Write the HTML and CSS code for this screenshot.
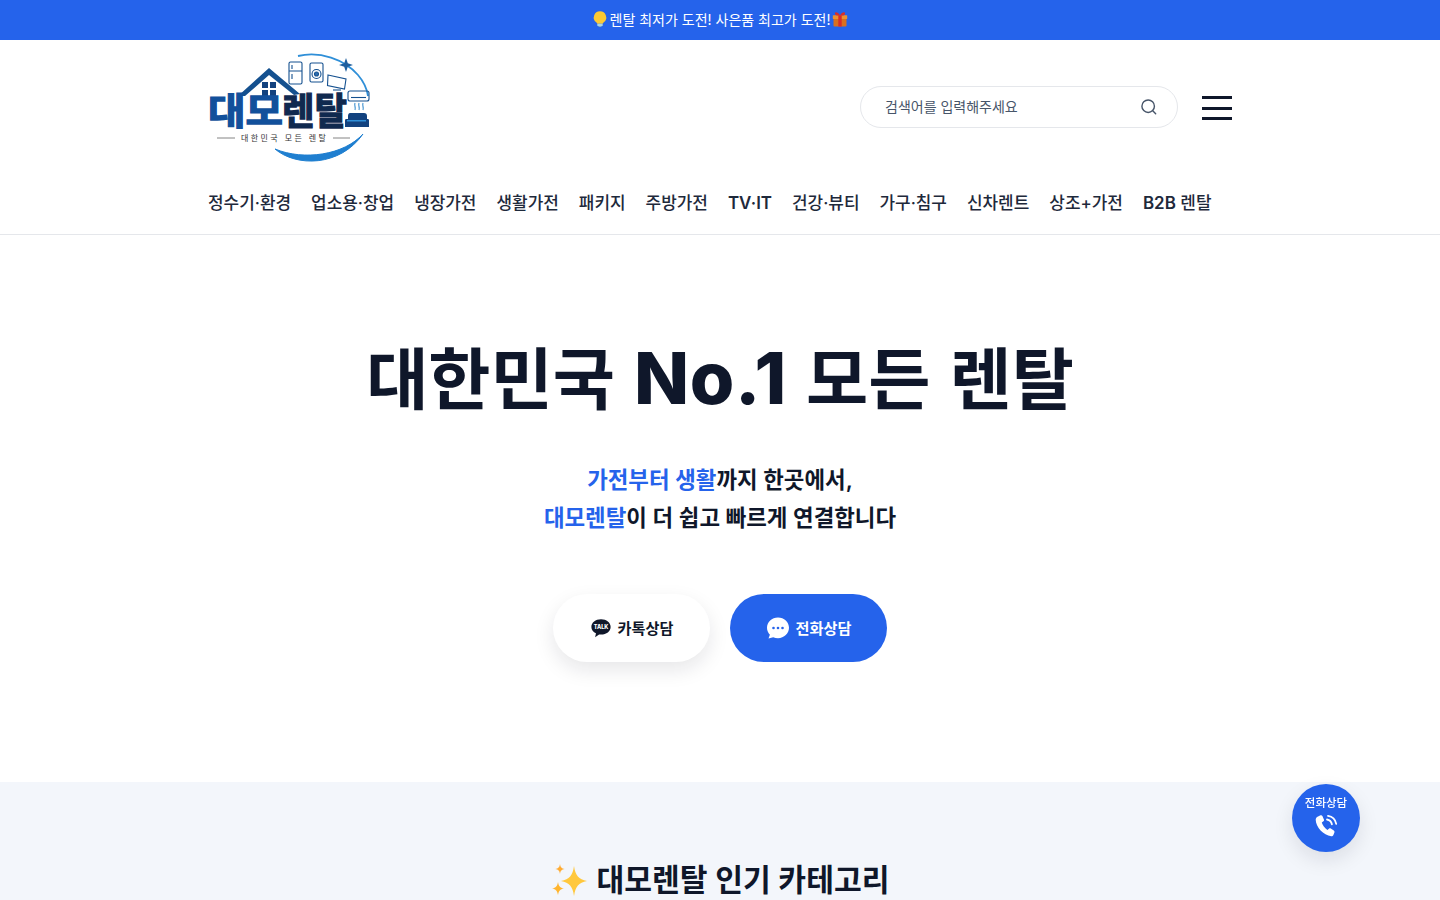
FILE: index.html
```html
<!DOCTYPE html>
<html lang="ko">
<head>
  <meta charset="UTF-8">
  <meta name="viewport" content="width=device-width, initial-scale=1">
  <title>대모렌탈</title>
  <link rel="stylesheet" href="styles.css">
</head>
<body>
  <div class="top-banner">
    <svg class="emoji" viewBox="0 0 16 16"><path d="M8 .2a6.200 6.200 0 0 0-3.800 11.100c.6.500.9 1 1 1.500h5.600c.1-.5.400-1 1-1.500A6.200 6.200 0 0 0 8 .2z" fill="#fcc932"/><rect x="5.300" y="12.800" width="5.400" height="2.200" rx=".6" fill="#a9d3e4"/><rect x="6.500" y="15" width="3" height="1" fill="#7fb0c6"/></svg>
    <span>렌탈 최저가 도전! 사은품 최고가 도전!</span>
    <svg class="emoji" viewBox="0 0 16 16"><rect x="1.500" y="7" width="13" height="8.500" rx="1" fill="#d9701f"/><rect x=".8" y="4.200" width="14.400" height="3.800" rx=".6" fill="#ee9130"/><rect x="6.300" y="4.200" width="3.400" height="11.300" fill="#d92d2a"/><path d="M8 4.500C6 .5 2.500.5 3 2.800S6.500 4.500 8 4.500zM8 4.500c2-4 5.500-4 5-1.700S9.500 4.500 8 4.500z" fill="#d92d2a"/></svg>
  </div>

  <header class="site-header">
    <div class="container">
      <div class="header-top">
        <a class="logo" href="#">
          <svg viewBox="0 0 165 115" width="165" height="115">
            <path d="M90 5C112 0 136 8 150 24C156 31 159 38 160 45" fill="none" stroke="#2f8fd8" stroke-width="1.800"/>
            <path d="M67 98C88 116 132 116 155 83C136 104 96 110 67 98z" fill="#1f7fd0" stroke="#1f7fd0" stroke-width="1"/>
            <path d="M30 45L61 17L92 43L86 44L61 24L37 45z" fill="#14508f"/>
            <path d="M54 31h6v6h-6zM62 31h6v6h-6zM54 39h6v6h-6zM62 39h6v6h-6z" fill="#12427f"/>
            <g fill="none" stroke="#14508f" stroke-width="1.100">
              <rect x="81" y="11" width="13" height="22" rx="1.500"/>
              <path d="M81 20h13M84 14v4M84 23v5"/>
              <rect x="102" y="12" width="13" height="19" rx="1.500"/>
              <circle cx="108.500" cy="23" r="4.500"/>
              <circle cx="108.500" cy="23" r="2" fill="#2f6fb0"/>
              <path d="M120 24l18 4-1.500 10-17-3.500z"/>
              <path d="M125 39h8"/>
              <rect x="140" y="40" width="21" height="10" rx="2"/>
              <path d="M143 46.500h15"/>
              <path d="M147 52c-1 3 1 4 0 7M151 52c-1 3 1 4 0 7M155 52c-1 3 1 4 0 7" stroke="#3a8fd0"/>
            </g>
            <path d="M138 7l1.800 5.200L145 14l-5.200 1.800L138 21l-1.800-5.200L131 14l5.200-1.800z" fill="#1f5f9f"/>
            <text class="logo-word" x="0" y="74" textLength="75" lengthAdjust="spacingAndGlyphs">대모</text>
            <text class="logo-word dark" x="74" y="74" textLength="65" lengthAdjust="spacingAndGlyphs">렌탈</text>
            <path d="M142 62h14c2 0 3 1 3 3v3h1c1 0 1 1 1 2v6h-24v-6c0-1 0-2 1-2h2v-3c0-2 1-3 2-3z" fill="#12427f"/>
            <path d="M139 69h19v1.500h-19z" fill="#2f8fd8"/>
            <path d="M9 87h18M125 87h17" stroke="#666" stroke-width=".8"/>
            <text class="logo-sub" x="33" y="89.500">대한민국 모든 렌탈</text>
          </svg>
        </a>
        <div class="header-tools">
          <form class="search-box">
            <input type="text" placeholder="검색어를 입력해주세요">
            <svg class="search-icon" viewBox="0 0 24 24" width="20" height="20"><circle cx="11" cy="11" r="7.500"/><path d="M16.500 16.500L20 20"/></svg>
          </form>
          <button class="menu-btn" aria-label="메뉴"><span></span><span></span><span></span></button>
        </div>
      </div>
      <nav class="main-nav">
        <a href="#">정수기·환경</a>
        <a href="#">업소용·창업</a>
        <a href="#">냉장가전</a>
        <a href="#">생활가전</a>
        <a href="#">패키지</a>
        <a href="#">주방가전</a>
        <a href="#"><b>TV·IT</b></a>
        <a href="#">건강·뷰티</a>
        <a href="#">가구·침구</a>
        <a href="#">신차렌트</a>
        <a href="#">상조+가전</a>
        <a href="#"><b>B2B</b> 렌탈</a>
      </nav>
    </div>
  </header>

  <section class="hero">
    <h1>대한민국 <span class="latin">No.1</span> 모든 렌탈</h1>
    <p class="hero-sub"><em>가전부터 생활</em>까지 한곳에서,<br><em>대모렌탈</em>이 더 쉽고 빠르게 연결합니다</p>
    <div class="hero-buttons">
      <a class="btn btn-white" href="#">
        <svg viewBox="0 0 24 24" width="22" height="22"><path d="M12 2.500C6 2.500 1.500 6.200 1.500 10.800c0 3 2 5.600 5 7l-.9 4.200 4.300-3c.7.100 1.400.1 2.100.1 6 0 10.500-3.700 10.500-8.300S18 2.500 12 2.500z" fill="#0f172a"/><text class="talk-text" x="12" y="13.200">TALK</text></svg>
        <span>카톡상담</span>
      </a>
      <a class="btn btn-blue" href="#">
        <svg viewBox="0 0 24 24" width="24" height="24"><path d="M12 1.500C5.900 1.500 1 6.100 1 11.800c0 2.700 1.100 5.100 2.900 7l-1.400 3.700 4.700-1.300c1.500.7 3.100 1 4.800 1 6.100 0 11-4.700 11-10.400S18.100 1.500 12 1.500z" fill="#fff"/><circle cx="7.500" cy="12" r="1.300" fill="#2563eb"/><circle cx="12" cy="12" r="1.300" fill="#2563eb"/><circle cx="16.500" cy="12" r="1.300" fill="#2563eb"/></svg>
        <span>전화상담</span>
      </a>
    </div>
  </section>

  <section class="category">
    <h2><svg class="sparkle" viewBox="0 0 36 36"><path d="M23 3c1.500 10 4.500 13 13 15-8.500 2-11.500 5-13 15-1.500-10-4.500-13-13-15 8.500-2 11.500-5 13-15z" fill="#ffc83d"/><path d="M9 1c.6 3.400 1.600 4.400 4.600 5-3 .6-4 1.600-4.600 5-.6-3.400-1.600-4.400-4.600-5 3-.6 4-1.600 4.600-5z" fill="#ffac33"/><path d="M7 19c.8 4.400 2 5.600 6 6.500-4 .9-5.200 2.100-6 6.500-.8-4.400-2-5.600-6-6.500 4-.9 5.200-2.100 6-6.500z" fill="#ffb52e"/></svg>대모렌탈 인기 카테고리</h2>
  </section>

  <a class="call-float" href="#">
    <span>전화상담</span>
    <svg viewBox="0 0 26 26" width="26" height="26"><path d="M5 3.500l2.500-1.200c.8-.3 1.500 0 1.900.8l1.500 3.300c.3.700.1 1.400-.5 1.900L8.800 9.500c.8 2.900 2.700 5.500 5.600 7.400l1.500-1.200c.6-.5 1.300-.5 1.900-.2l3 1.900c.7.500.9 1.200.6 2l-1 2.500c-.4.900-1.200 1.500-2.200 1.400C10.500 22.500 2.800 14 2.700 6.800c0-1.400.9-2.700 2.300-3.300z" fill="#fff"/><path d="M14 6.500c2.500.4 4.400 2.300 4.900 4.800M15 2.800c4.200.6 7.400 3.800 8.200 8" fill="none" stroke="#fff" stroke-width="1.800" stroke-linecap="round"/></svg>
  </a>
</body>
</html>
```

FILE: styles.css
```css
* {
  box-sizing: border-box;
}
html, body {
  height: 100%;
}
body {
  margin: 0;
  overflow: hidden;
  background: #fff;
  color: #0f172a;
  font-family: Inter, "Noto Sans CJK KR", sans-serif;
}
a {
  color: inherit;
  text-decoration: none;
}
.top-banner {
  height: 40px;
  padding-bottom: 2px;
  background: #2563eb;
  color: #fff;
  font-size: 14px;
  display: flex;
  align-items: center;
  justify-content: center;
  gap: 2px;
}
.emoji {
  width: 16px;
  height: 16px;
}
.site-header {
  height: 195px;
  border-bottom: 1px solid #e5e7eb;
}
.container {
  width: 1024px;
  margin: 0 auto;
}
.header-top {
  height: 136px;
  display: flex;
  align-items: center;
  justify-content: space-between;
}
.logo {
  display: block;
  width: 165px;
  height: 115px;
}
.logo-word {
  font-size: 37px;
  font-weight: 700;
  fill: #12509b;
  stroke: #12509b;
  stroke-width: 1.300px;
}
.logo-word.dark {
  fill: #10294f;
  stroke: #10294f;
}
.logo-sub {
  font-size: 8px;
  fill: #333;
  letter-spacing: 2.400px;
}
.header-tools {
  display: flex;
  align-items: center;
  gap: 24px;
}
.search-box {
  width: 318px;
  height: 42px;
  margin: 0 0 2px;
  padding: 0 18px 0 24px;
  border: 1px solid #e5e7eb;
  border-radius: 21px;
  display: flex;
  align-items: center;
}
.search-box input {
  flex: 1;
  border: none;
  outline: none;
  padding: 0 0 2px;
  font-family: inherit;
  font-size: 14px;
}
.search-box input::placeholder {
  color: #475569;
  opacity: 1;
}
.search-icon {
  fill: none;
  stroke: #475569;
  stroke-width: 1.700;
  stroke-linecap: round;
}
.menu-btn {
  width: 30px;
  height: 24px;
  padding: 0;
  border: none;
  background: none;
  display: flex;
  flex-direction: column;
  justify-content: space-between;
}
.menu-btn span {
  display: block;
  height: 3px;
  background: #0f172a;
}
.main-nav {
  display: flex;
  gap: 20px;
  height: 58px;
  padding-top: 15px;
  align-items: baseline;
  font-size: 16.960px;
  line-height: 24px;
  font-weight: 500;
  color: #1e293b;
  white-space: nowrap;
}
.main-nav b {
  font-weight: 600;
}
.hero {
  height: 547px;
  padding-top: 98px;
  text-align: center;
}
.hero h1 {
  margin: 0;
  font-size: 67.600px;
  line-height: 90px;
  font-weight: 700;
  word-spacing: 3px;
  color: #0f172a;
}
.hero h1 .latin {
  font-size: 72px;
  font-weight: 800;
  letter-spacing: 0.01em;
}
.hero-sub {
  margin: 36px 0 0;
  font-size: 22.400px;
  line-height: 37.500px;
  font-weight: 600;
  color: #0f172a;
}
.hero-sub em {
  font-style: normal;
  color: #2563eb;
}
.hero-buttons {
  margin-top: 58px;
  display: flex;
  justify-content: center;
  gap: 20px;
}
.btn {
  width: 157px;
  height: 68px;
  border-radius: 34px;
  display: flex;
  align-items: center;
  justify-content: center;
  gap: 6px;
  font-size: 15.200px;
  font-weight: 600;
}
.btn span {
  margin-bottom: 2px;
}
.btn-white {
  background: #fff;
  color: #0f172a;
  box-shadow: 0 8px 20px rgba(15, 23, 42, 0.1);
}
.btn-blue {
  background: #2563eb;
  color: #fff;
}
.talk-text {
  font-size: 6px;
  font-weight: 800;
  fill: #fff;
  text-anchor: middle;
}
.category {
  height: 300px;
  background: #f3f6fb;
  padding-top: 76px;
  text-align: center;
}
.category h2 {
  margin: 0;
  font-size: 30.200px;
  line-height: 44px;
  font-weight: 600;
  color: #0f172a;
}
.sparkle {
  width: 36px;
  height: 36px;
  margin-right: 10px;
  vertical-align: -8px;
}
.call-float {
  position: fixed;
  right: 80px;
  bottom: 48px;
  width: 68px;
  height: 68px;
  border-radius: 50%;
  background: #2563eb;
  color: #fff;
  box-shadow: 0 8px 20px rgba(15, 23, 42, 0.1);
  display: flex;
  flex-direction: column;
  align-items: center;
  padding-top: 11px;
  font-size: 11.500px;
  line-height: 16px;
  font-weight: 500;
  gap: 2px;
}
```
